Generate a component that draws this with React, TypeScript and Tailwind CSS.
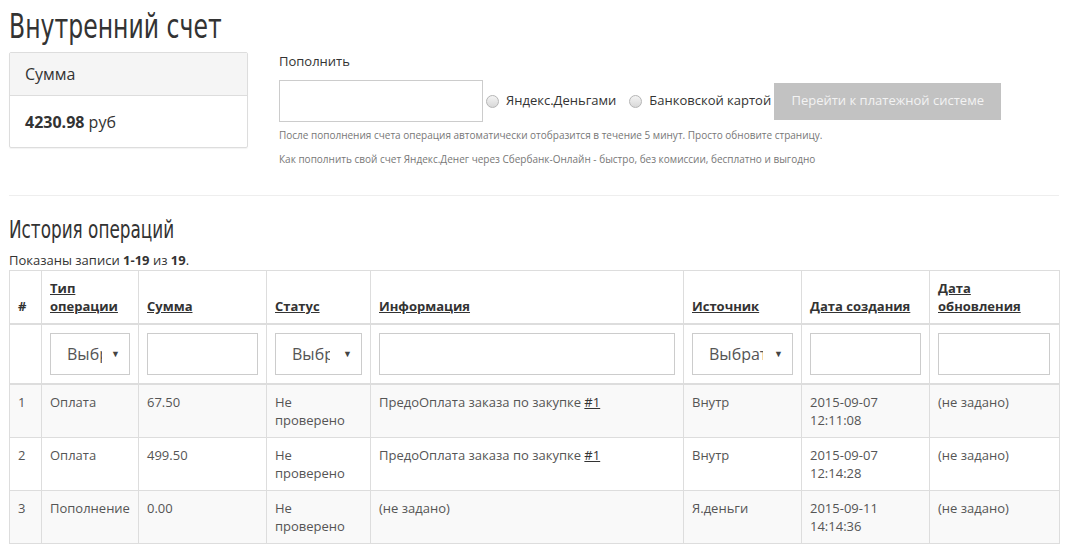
import React from "react";

const body = { fontFamily: '"Open Sans", "Liberation Sans", sans-serif' };
const cond = { fontFamily: '"DejaVu Sans Condensed", "Open Sans", sans-serif' };

function Radio() {
  return (
    <span className="inline-block w-[13px] h-[13px] rounded-full border border-[#b5b5b5] bg-gradient-to-b from-[#f4f4f4] to-[#d8d8d8] mr-[7px]" />
  );
}

function Select({ text, w, tw }: { text: string; w: string; tw: string }) {
  return (
    <div className={`${w} h-[42px] border border-[#ccc] bg-white flex items-center pl-[16px] pr-[9px] overflow-hidden`}>
      <span className={`${tw} text-[16px] text-[#555] whitespace-nowrap overflow-hidden`}>{text}</span>
      <span className="text-[9px] text-[#444] ml-auto">▼</span>
    </div>
  );
}

function Input({ w }: { w: string }) {
  return <div className={`${w} h-[42px] border border-[#ccc] bg-white`} />;
}

const rows = [
  { n: "1", t: "Оплата", s: "67.50", info: true, src: "Внутр", d1: "2015-09-07", d2: "12:11:08" },
  { n: "2", t: "Оплата", s: "499.50", info: true, src: "Внутр", d1: "2015-09-07", d2: "12:14:28" },
  { n: "3", t: "Пополнение", s: "0.00", info: false, src: "Я.деньги", d1: "2015-09-11", d2: "14:14:36" },
];

export default function App() {
  const th = "border border-[#ddd] border-b-2 px-[8px] py-[8px] text-left align-bottom font-bold text-[#333]";
  const td = "border border-[#ddd] px-[8px] py-[8px] align-top";
  return (
    <div className="bg-white w-[1069px] h-[545px] overflow-hidden pl-[9px] pr-[10px] text-[#555]" style={body}>
      <h1
        className="inline-block origin-left scale-x-[0.77] text-[34px] leading-[50px] text-[#333] font-normal pt-[1px] whitespace-nowrap"
        style={cond}
      >
        Внутренний счет
      </h1>
      <div className="flex mt-[1px]">
        <div className="w-[239px] h-[96px] border border-[#ddd] rounded-[2px] shadow-[0_1px_1px_rgba(0,0,0,0.05)]">
          <div className="h-[43px] bg-[#f5f5f5] border-b border-[#ddd] flex items-center pl-[15px] text-[16px] text-[#333]">
            Сумма
          </div>
          <div className="h-[51px] flex items-center pl-[15px] text-[16px] text-[#333]">
            <b className="font-bold">4230.98</b>&nbsp;руб
          </div>
        </div>
        <div className="ml-[31px] flex flex-col">
          <div className="text-[13px] text-[#333] leading-[18px]">Пополнить</div>
          <div className="flex items-center mt-[10px]">
            <div className="w-[204px] h-[42px] border border-[#ccc] bg-white" />
            <div className="flex items-center ml-[3px] text-[13px] text-[#333]">
              <Radio />
              <span>Яндекс.Деньгами</span>
            </div>
            <div className="flex items-center ml-[13px] text-[13px] text-[#333]">
              <Radio />
              <span>Банковской картой</span>
            </div>
            <div className="ml-[3px] w-[227px] h-[37px] bg-[#c2c2c2] text-[#f3f3f3] text-[13px] flex items-center justify-center">
              Перейти к платежной системе
            </div>
          </div>
          <div className="text-[10px] text-[#777] mt-[6px] leading-[14px] whitespace-nowrap">
            После пополнения счета операция автоматически отобразится в течение 5 минут. Просто обновите страницу.
          </div>
          <div className="text-[10px] text-[#777] mt-[10px] leading-[14px] whitespace-nowrap">
            Как пополнить свой счет Яндекс.Денег через Сбербанк-Онлайн - быстро, без комиссии, бесплатно и выгодно
          </div>
        </div>
      </div>
      <div className="border-t border-[#eee] mt-[29px]" />
      <h2
        className="block origin-left scale-x-[0.78] text-[24px] leading-[30px] text-[#333] mt-[19px] whitespace-nowrap"
        style={cond}
      >
        История операций
      </h2>
      <div className="text-[13px] leading-[18px] mt-[6px] text-[#333]">
        Показаны записи <b>1-19</b> из <b>19</b>.
      </div>
      <table className="w-[1050px] border-collapse text-[13px] leading-[18px] mt-[1px] table-fixed">
        <colgroup>
          <col className="w-[32px]" />
          <col className="w-[97px]" />
          <col className="w-[128px]" />
          <col className="w-[104px]" />
          <col className="w-[313px]" />
          <col className="w-[118px]" />
          <col className="w-[128px]" />
          <col className="w-[130px]" />
        </colgroup>
        <thead>
          <tr>
            <th className={th}>#</th>
            <th className={th}><span className="underline">Тип<br />операции</span></th>
            <th className={th}><span className="underline">Сумма</span></th>
            <th className={th}><span className="underline">Статус</span></th>
            <th className={th}><span className="underline">Информация</span></th>
            <th className={th}><span className="underline">Источник</span></th>
            <th className={th}><span className="underline">Дата создания</span></th>
            <th className={th}><span className="underline">Дата<br />обновления</span></th>
          </tr>
          <tr>
            <td className={td + " border-b-2"}></td>
            <td className={td + " border-b-2"}><Select text="Выбрать" w="w-[80px]" tw="w-[35px]" /></td>
            <td className={td + " border-b-2"}><Input w="w-[111px]" /></td>
            <td className={td + " border-b-2"}><Select text="Выбрать" w="w-[87px]" tw="w-[38px]" /></td>
            <td className={td + " border-b-2"}><Input w="w-[296px]" /></td>
            <td className={td + " border-b-2"}><Select text="Выбрать" w="w-[101px]" tw="w-[54px]" /></td>
            <td className={td + " border-b-2"}><Input w="w-[111px]" /></td>
            <td className={td + " border-b-2"}><Input w="w-[112px]" /></td>
          </tr>
        </thead>
        <tbody>
          {rows.map((r, i) => (
            <tr key={r.n} className={i % 2 === 0 ? "bg-[#f9f9f9]" : "bg-white"}>
              <td className={td}>{r.n}</td>
              <td className={td}>{r.t}</td>
              <td className={td}>{r.s}</td>
              <td className={td}>Не<br />проверено</td>
              <td className={td}>
                {r.info ? (
                  <>ПредоОплата заказа по закупке <span className="underline text-[#333]">#1</span></>
                ) : (
                  "(не задано)"
                )}
              </td>
              <td className={td}>{r.src}</td>
              <td className={td}>{r.d1}<br />{r.d2}</td>
              <td className={td}>(не задано)</td>
            </tr>
          ))}
        </tbody>
      </table>
    </div>
  );
}
